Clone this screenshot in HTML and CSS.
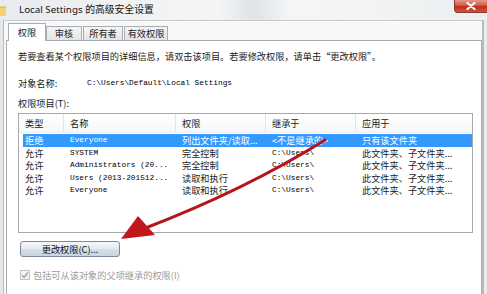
FILE: index.html
```html
<!DOCTYPE html>
<html lang="zh-CN">
<head>
<meta charset="utf-8">
<title>Local Settings 的高级安全设置</title>
<link rel="stylesheet" href="styles.css">
</head>
<body>
<div class="window">
  <div class="titlebar">
    <svg class="folder" width="12" height="13" viewBox="0 0 12 13"><path d="M0 2h5l1 1.5h6V13H0z" fill="#e0b43a"/><path d="M0 4.5h12V13H0z" fill="#f3d46c"/></svg>
    <span class="title">Local Settings 的高级安全设置</span>
    <div class="close"><svg width="10" height="8" viewBox="0 0 10 8"><path d="M1.5 1l7 6M8.5 1l-7 6" stroke="#fff" stroke-width="2.2" stroke-linecap="round"/></svg></div>
  </div>
  <div class="client">
    <div class="tabs">
      <div class="tab active">权限</div>
      <div class="tab">审核</div>
      <div class="tab">所有者</div>
      <div class="tab">有效权限</div>
    </div>
    <div class="panel">
      <p class="intro">若要查看某个权限项目的详细信息，请双击该项目。若要修改权限，请单击“更改权限”。</p>
      <div class="obj"><span class="obj-label">对象名称:</span><span class="mono">C:\Users\Default\Local Settings</span></div>
      <div class="label">权限项目(T):</div>
      <div class="list">
        <div class="head">
          <span>类型</span><span>名称</span><span>权限</span><span>继承于</span><span>应用于</span>
        </div>
        <div class="rows">
          <div class="row sel"><span>拒绝</span><span class="mono">Everyone</span><span>列出文件夹/读取...</span><span>&lt;不是继承的&gt;</span><span>只有该文件夹</span></div>
          <div class="row"><span>允许</span><span class="mono">SYSTEM</span><span>完全控制</span><span class="mono">C:\Users\</span><span>此文件夹、子文件夹...</span></div>
          <div class="row"><span>允许</span><span class="mono">Administrators (20...</span><span>完全控制</span><span class="mono">C:\Users\</span><span>此文件夹、子文件夹...</span></div>
          <div class="row"><span>允许</span><span class="mono">Users (2013-201512...</span><span>读取和执行</span><span class="mono">C:\Users\</span><span>此文件夹、子文件夹...</span></div>
          <div class="row"><span>允许</span><span class="mono">Everyone</span><span>读取和执行</span><span class="mono">C:\Users\</span><span>此文件夹、子文件夹...</span></div>
        </div>
      </div>
      <button class="btn">更改权限(C)...</button>
      <div class="check">
        <span class="box"><svg width="8" height="8" viewBox="0 0 8 8"><path d="M1 4.2l2 2L7 1.5" stroke="#a8a8a8" stroke-width="1.6" fill="none"/></svg></span>
        <span>包括可从该对象的父项继承的权限(I)</span>
      </div>
    </div>
  </div>
  <svg class="arrow" width="487" height="294" viewBox="0 0 487 294">
    <path d="M325 140 Q245 190 143 229" stroke="#b5161b" stroke-width="3.2" fill="none" stroke-linecap="round"/>
    <polygon points="121,239 138,216 155,235" fill="#c4171d"/>
  </svg>
</div>
</body>
</html>
```

FILE: styles.css
```css
* { box-sizing: border-box; }
html, body { margin: 0; padding: 0; }
body {
  width: 487px;
  height: 294px;
  overflow: hidden;
  font-family: "Noto Sans CJK SC", "Noto Sans", sans-serif;
  font-size: 9.2px;
  color: #1a1a1a;
  background: #f4f5f6;
}
.window {
  position: relative;
  width: 487px;
  height: 294px;
  overflow: hidden;
  background: linear-gradient(90deg, #e4e7ea 0%, #f0f2f3 40%, #f7f8f8 70%, #e9ecee 100%);
}
.titlebar {
  height: 20px;
  display: flex;
  align-items: center;
  padding-left: 19px;
  position: relative;
  background: linear-gradient(90deg, #e9ecef 0%, #f4f5f6 45%, #dfe3e6 52%, #f5f6f7 60%, #eceff1 100%);
}
.folder { position: absolute; left: -6px; top: 3px; }
.title {
  font-family: "Noto Sans", "Noto Sans CJK SC", sans-serif;
  font-size: 9.8px;
  color: #111;
  margin-top: -3px;
  white-space: nowrap;
}
.close {
  position: absolute;
  right: 0;
  top: 0;
  width: 33px;
  height: 13px;
  border: 1px solid #8a3a30;
  border-top: none;
  border-right: none;
  border-bottom-left-radius: 4px;
  background: linear-gradient(180deg, #e39a8c 0%, #d35a45 45%, #bf2e1a 55%, #d0533c 100%);
  display: flex;
  align-items: center;
  justify-content: center;
}
.client {
  margin-left: 3px;
  width: 481px;
  height: 274px;
  border-left: 1px solid #b8bcc0;
  border-top: 1px solid #c6c9cc;
  border-right: 2px solid #b9bcbf;
  background: #f8f8f8;
  padding: 2px 0 0 2px;
}
.tabs {
  display: flex;
  align-items: flex-end;
  height: 17px;
  padding-left: 2px;
  position: relative;
  z-index: 1;
}
.tab {
  height: 14px;
  padding: 0;
  margin-right: 1px;
  border: 1px solid #a9adb1;
  border-bottom: none;
  background: linear-gradient(180deg, #f5f5f5, #e4e4e4);
  line-height: 13px;
  font-size: 9.2px;
  color: #222;
  text-align: center;
  white-space: nowrap;
}
.tab:nth-child(2) { width: 36px; }
.tab:nth-child(3) { width: 40px; }
.tab:nth-child(4) { width: 44px; }
.tab.active {
  width: 38px;
  height: 18px;
  background: #fff;
  line-height: 17px;
  margin-bottom: -1px;
  margin-right: 0;
}
.panel {
  width: 476px;
  height: 257px;
  background: #fff;
  border: 1px solid #a9adb1;
  border-bottom: none;
  padding: 9px 0 0 11px;
}
.intro {
  margin: 0;
  line-height: 12px;
  white-space: nowrap;
}
.obj {
  margin-top: 15px;
  height: 12px;
  display: flex;
  align-items: center;
}
.obj-label { width: 69px; }
.mono {
  font-family: "Liberation Mono", "DejaVu Sans Mono", monospace;
  font-size: 7.8px;
  color: #000;
}
.label {
  margin-top: 8px;
  line-height: 12px;
}
.list {
  margin-top: 4px;
  width: 455px;
  height: 120px;
  border: 1px solid #a6a9ad;
  background: #fff;
}
.head {
  display: grid;
  grid-template-columns: 45px 112px 90px 90px 1fr;
  height: 19px;
  align-items: center;
  background: linear-gradient(180deg, #ffffff, #f6f7f8);
  border-bottom: 1px solid #eceef0;
}
.head span {
  padding-left: 6px;
  height: 18px;
  line-height: 19px;
  border-right: 1px solid #e2e4e6;
}
.head span:last-child { border-right: none; }
.rows { padding: 1px 0 0 4px; }
.row {
  display: grid;
  grid-template-columns: 41px 112px 90px 90px 1fr;
  height: 12.5px;
  line-height: 12.5px;
  align-items: center;
  white-space: nowrap;
  width: 449px;
}
.row span { padding-left: 6px; overflow: hidden; }
.row span:first-child { padding-left: 2px; }
.row.sel { background: #3399ff; color: #fff; }
.row.sel .mono { color: #fff; }
.btn {
  display: block;
  margin-top: 8px;
  margin-left: 2px;
  width: 100px;
  height: 16px;
  padding: 0;
  font-family: "Noto Sans CJK SC", "Noto Sans", sans-serif;
  font-size: 9.2px;
  color: #111;
  border: 1px solid #7c8a99;
  border-radius: 3px;
  background: linear-gradient(180deg, #f3f6f9 0%, #e6ecf2 45%, #d3dde7 55%, #c8d3de 100%);
  line-height: 14px;
}
.check {
  margin-top: 12px;
  margin-left: 2px;
  display: flex;
  align-items: center;
  gap: 3px;
  color: #9b9b9b;
  height: 12px;
}
.box {
  width: 10px;
  height: 10px;
  border: 1px solid #c2c2c2;
  background: #f3f3f3;
  display: flex;
  align-items: center;
  justify-content: center;
}
.arrow {
  position: absolute;
  left: 0;
  top: 0;
  pointer-events: none;
}
```
